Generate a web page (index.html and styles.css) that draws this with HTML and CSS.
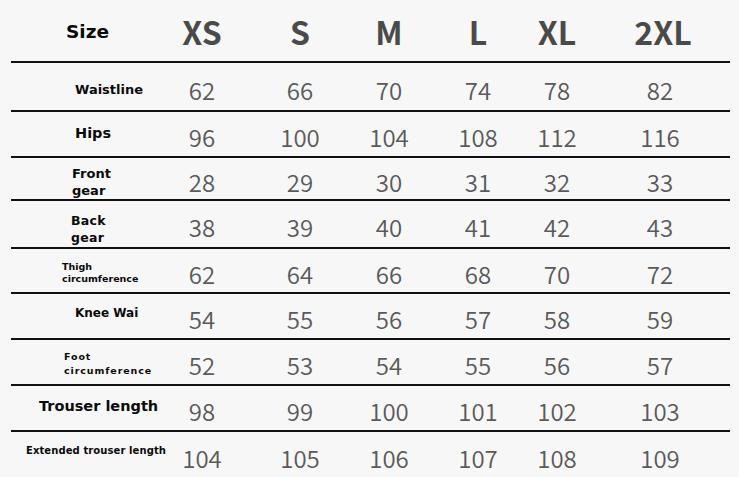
FILE: index.html
```html
<!DOCTYPE html>
<html lang="en">
<head>
<meta charset="utf-8">
<title>Size chart</title>
<link rel="stylesheet" href="styles.css">
</head>
<body>
<div class="chart">
  <div class="row head">
    <div class="label l-size">Size</div>
    <div class="size">XS</div><div class="size">S</div><div class="size">M</div><div class="size">L</div><div class="size">XL</div><div class="size last">2XL</div>
  </div>
  <div class="row r1">
    <div class="label l-waist">Waistline</div>
    <div class="num">62</div><div class="num">66</div><div class="num">70</div><div class="num">74</div><div class="num">78</div><div class="num last">82</div>
  </div>
  <div class="row r2">
    <div class="label l-hips">Hips</div>
    <div class="num">96</div><div class="num">100</div><div class="num">104</div><div class="num">108</div><div class="num">112</div><div class="num last">116</div>
  </div>
  <div class="row r3">
    <div class="label l-front">Front<br>gear</div>
    <div class="num">28</div><div class="num">29</div><div class="num">30</div><div class="num">31</div><div class="num">32</div><div class="num last">33</div>
  </div>
  <div class="row r4">
    <div class="label l-back">Back<br>gear</div>
    <div class="num">38</div><div class="num">39</div><div class="num">40</div><div class="num">41</div><div class="num">42</div><div class="num last">43</div>
  </div>
  <div class="row r5">
    <div class="label l-thigh">Thigh<br>circumference</div>
    <div class="num">62</div><div class="num">64</div><div class="num">66</div><div class="num">68</div><div class="num">70</div><div class="num last">72</div>
  </div>
  <div class="row r6">
    <div class="label l-knee">Knee Wai</div>
    <div class="num">54</div><div class="num">55</div><div class="num">56</div><div class="num">57</div><div class="num">58</div><div class="num last">59</div>
  </div>
  <div class="row r7">
    <div class="label l-foot">Foot<br>circumference</div>
    <div class="num">52</div><div class="num">53</div><div class="num">54</div><div class="num">55</div><div class="num">56</div><div class="num last">57</div>
  </div>
  <div class="row r8">
    <div class="label l-trouser">Trouser length</div>
    <div class="num">98</div><div class="num">99</div><div class="num">100</div><div class="num">101</div><div class="num">102</div><div class="num last">103</div>
  </div>
  <div class="row r9 final">
    <div class="label l-ext">Extended trouser length</div>
    <div class="num">104</div><div class="num">105</div><div class="num">106</div><div class="num">107</div><div class="num">108</div><div class="num last">109</div>
  </div>
</div>
</body>
</html>
```

FILE: styles.css
```css
html, body {
  margin: 0;
  padding: 0;
  background: #f7f7f7;
}

.chart {
  padding-left: 11px;
  width: 719px;
}

.row {
  display: grid;
  grid-template-columns: 142px 98px 98px 80px 98px 60px 143px;
  align-items: center;
  box-sizing: border-box;
  border-bottom: 2px solid #111;
}

.row.final { border-bottom: none; }

.head { height: 63px; }
.r1 { height: 49px; }
.r2 { height: 46px; }
.r3 { height: 43px; }
.r4 { height: 48px; }
.r5 { height: 45px; }
.r6 { height: 46px; }
.r7 { height: 46px; }
.r8 { height: 46px; }
.r9 { height: 45px; }

.label {
  font-family: "DejaVu Sans", Verdana, sans-serif;
  font-weight: bold;
  color: #0a0a0a;
  white-space: nowrap;
  justify-self: start;
}

.l-size    { font-size: 18.5px; margin-left: 55px; padding-top: 2px; }
.l-waist   { font-size: 13px; margin-left: 64px; padding-top: 6px; }
.l-hips    { font-size: 14.5px; margin-left: 64px; padding-bottom: 3px; }
.l-front   { font-size: 13px; line-height: 17px; margin-left: 61px; padding-top: 6px; }
.l-back    { font-size: 12.5px; line-height: 17px; margin-left: 60px; padding-top: 10px; letter-spacing: 0.3px; }
.l-thigh   { font-size: 9.5px; line-height: 12px; margin-left: 51px; padding-top: 5px; }
.l-knee    { font-size: 12px; margin-left: 64px; padding-bottom: 6px; }
.l-foot    { font-size: 9.5px; line-height: 14px; margin-left: 53px; padding-top: 4px; letter-spacing: 0.9px; }
.l-trouser { font-size: 14.5px; margin-left: 28px; padding-bottom: 4px; }
.l-ext     { font-size: 10px; margin-left: 15px; padding-bottom: 8px; letter-spacing: 0.1px; }

.size {
  font-family: "Noto Sans CJK SC", "Noto Sans", sans-serif;
  font-weight: bold;
  font-size: 32px;
  color: #4a4a4a;
  text-align: center;
}

.num {
  font-family: "Noto Sans CJK SC", "Noto Sans", sans-serif;
  font-weight: 350;
  font-size: 24px;
  color: #5a5a5a;
  text-align: center;
  padding-top: 5px;
}

.last { padding-left: 3px; }
.size.last { padding-left: 9px; }
```
